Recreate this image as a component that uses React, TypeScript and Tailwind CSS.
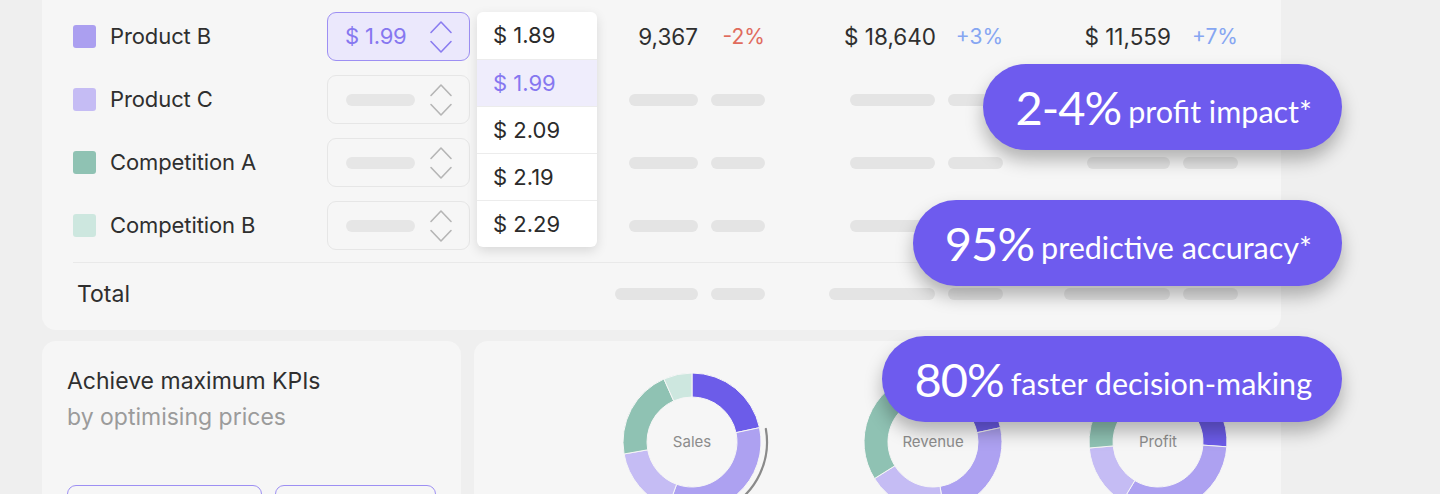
import React from 'react';

const INTER = { fontFamily: 'Inter, "Liberation Sans", sans-serif' };

type Row = {
	name: string;
	swatch: string;
	active?: boolean;
};

const rows: Row[] = [
	{ name: 'Product B', swatch: '#ab9ff0', active: true },
	{ name: 'Product C', swatch: '#c5bcf4' },
	{ name: 'Competition A', swatch: '#8fc2b3' },
	{ name: 'Competition B', swatch: '#cde7df' }
];

const firstRowValues = [
	{ value: '9,367', change: '-2%', negative: true },
	{ value: '$ 18,640', change: '+3%' },
	{ value: '$ 11,559', change: '+7%' }
];

const columnWidths = ['w-[295px]', 'w-[238px]', 'w-[235px]'];
const rowBars = ['w-[69px]', 'w-[85px]', 'w-[83px]'];
const totalBars = ['w-[83px]', 'w-[106px]', 'w-[106px]'];
const pctBars = ['w-[54px]', 'w-[55px]', 'w-[55px]'];

function Chevrons({ color }: { color: string }) {
	return (
		<svg
			width="24"
			height="34"
			viewBox="0 0 24 34"
			fill="none"
			stroke={color}
			strokeWidth="1.6"
			strokeLinecap="round"
			strokeLinejoin="round"
		>
			<path d="M2 12.5 L12 2 L22 12.5" />
			<path d="M2 21.5 L12 32 L22 21.5" />
		</svg>
	);
}

function Bar({ className }: { className: string }) {
	return <div className={`h-[12px] rounded-full bg-[#e4e4e4] ${className}`} />;
}

function PriceInput({ active }: { active?: boolean }) {
	if (active)
		return (
			<div className="flex h-[49px] w-[143px] items-center justify-between rounded-[9px] border-[1.5px] border-[#9d8ff3] bg-[#ebe8fc] pl-[17px] pr-[16px]">
				<span className="text-[22px] tracking-[-0.2px] text-[#8677f0]">$ 1.99</span>
				<Chevrons color="#8a7cf0" />
			</div>
		);

	return (
		<div className="flex h-[49px] w-[143px] items-center justify-between rounded-[9px] border border-[#e6e6e6] pl-[18px] pr-[16px]">
			<div className="h-[12px] w-[69px] rounded-full bg-[#e6e6e6]" />
			<Chevrons color="#b5b5b5" />
		</div>
	);
}

function ValueColumns({ filled, total }: { filled?: boolean; total?: boolean }) {
	return (
		<>
			{columnWidths.map((w, i) => (
				<div key={i} className={`flex items-center justify-end gap-[13px] ${w}`}>
					{filled ? (
						<>
							<span className="text-[22.5px] text-[#2f2f2f]">{firstRowValues[i].value}</span>
							<span
								className={`w-[54px] text-right text-[21px] ${
									firstRowValues[i].negative ? 'text-[#e06b5d]' : 'text-[#86a6f2]'
								}`}
							>
								{firstRowValues[i].change}
							</span>
						</>
					) : (
						<>
							<Bar className={total ? totalBars[i] : rowBars[i]} />
							<Bar className={pctBars[i]} />
						</>
					)}
				</div>
			))}
		</>
	);
}

function Dropdown() {
	const options = ['$ 1.89', '$ 1.99', '$ 2.09', '$ 2.19', '$ 2.29'];
	return (
		<div className="absolute left-[435px] top-[12px] w-[120px] overflow-hidden rounded-[6px] bg-white shadow-[0_4px_12px_rgba(0,0,0,0.12)]">
			{options.map((o, i) => (
				<div
					key={o}
					className={`flex h-[47px] items-center pl-[16px] text-[22px] ${
						i > 0 ? 'border-t border-[#ececec]' : ''
					} ${i === 1 ? 'bg-[#efedfc] text-[#8677f0]' : 'text-[#2b2b2b]'}`}
				>
					{o}
				</div>
			))}
		</div>
	);
}

function PricingTable() {
	return (
		<div className="relative h-[330px] rounded-b-[14px] bg-[#f6f6f6] pl-[31px] pr-[28px] pt-[5px]">
			{rows.map((row, i) => (
				<div key={row.name} className="flex h-[63px] items-center">
					<div className="flex w-[254px] items-center gap-[14px]">
						<div className="h-[23px] w-[23px] rounded-[3px]" style={{ background: row.swatch }} />
						<span className="text-[22px] tracking-[-0.1px] text-[#2f2f2f]">{row.name}</span>
					</div>
					<PriceInput active={row.active} />
					<ValueColumns filled={i === 0} />
				</div>
			))}
			<div className="mt-[5px] h-px bg-[#e9e9e9]" />
			<div className="flex h-[62px] items-center">
				<span className="w-[397px] pl-[4px] text-[23px] text-[#2f2f2f]">Total</span>
				<ValueColumns total />
			</div>
			<Dropdown />
		</div>
	);
}

type Seg = [number, number, string];

function point(cx: number, cy: number, r: number, deg: number) {
	const a = (deg * Math.PI) / 180;
	return [cx + r * Math.sin(a), cy - r * Math.cos(a)];
}

function segPath(a0: number, a1: number, R: number, r: number) {
	const c = 80;
	const large = a1 - a0 > 180 ? 1 : 0;
	const [x0, y0] = point(c, c, R, a0);
	const [x1, y1] = point(c, c, R, a1);
	const [x2, y2] = point(c, c, r, a1);
	const [x3, y3] = point(c, c, r, a0);
	return `M${x0} ${y0} A${R} ${R} 0 ${large} 1 ${x1} ${y1} L${x2} ${y2} A${r} ${r} 0 ${large} 0 ${x3} ${y3} Z`;
}

function Donut({ label, segments, marker }: { label: string; segments: Seg[]; marker?: boolean }) {
	return (
		<div className="relative h-[160px] w-[160px] shrink-0">
			<svg width="160" height="160" viewBox="0 0 160 160">
				{segments.map(([a0, a1, color], i) => (
					<path key={i} d={segPath(a0, a1, 69, 45)} fill={color} stroke="#f6f6f6" strokeWidth="1" />
				))}
				{marker && (
					<path
						d={`M${point(80, 80, 75, 80).join(' ')} A75 75 0 0 1 ${point(80, 80, 75, 150).join(' ')}`}
						fill="none"
						stroke="#8a8a8a"
						strokeWidth="2.2"
						strokeLinecap="round"
					/>
				)}
			</svg>
			<div className="absolute inset-0 flex items-center justify-center text-[15px] text-[#8c8c8c]">
				{label}
			</div>
		</div>
	);
}

const DARK = '#6c5ce9';
const MID = '#ada1f1';
const LIGHT = '#c5bcf4';
const TEAL = '#8fc2b3';
const PALE = '#cde7df';

function Pill({ big, rest }: { big: string; rest: string }) {
	return (
		<div
			className="flex h-[86px] items-center rounded-full bg-[#6e5bee] pl-[32px] pr-[30px] text-white shadow-[0_10px_18px_rgba(0,0,0,0.28)]"
			style={{ fontFamily: 'Lato, "Open Sans", sans-serif' }}
		>
			<span className="text-[47px] leading-none tracking-[-1px]">{big}</span>
			<span className="ml-[7px] mt-[8px] text-[30.5px] leading-none">{rest}</span>
		</div>
	);
}

export default function App() {
	return (
		<div className="relative h-[494px] w-[1440px] overflow-hidden bg-[#efefef]" style={INTER}>
			<div className="w-[1281px] pl-[42px]">
				<PricingTable />

				<div className="mt-[11px] flex gap-[13px]">
					<div className="h-[200px] w-[419px] shrink-0 rounded-[14px] bg-[#f6f6f6] pl-[25px] pt-[22px]">
						<p className="text-[23px] leading-[36px] text-[#2f2f2f]">Achieve maximum KPIs</p>
						<p className="text-[23px] leading-[36px] text-[#9b9b9b]">by optimising prices</p>
						<div className="mt-[50px] flex gap-[13px]">
							<div className="h-[48px] w-[195px] rounded-[9px] border-[1.5px] border-[#9d8ff3]" />
							<div className="h-[48px] w-[161px] rounded-[9px] border-[1.5px] border-[#9d8ff3]" />
						</div>
					</div>

					<div className="flex h-[200px] flex-1 rounded-[14px] bg-[#f6f6f6] pl-[138px] pt-[21px]">
						<Donut
							label="Sales"
							marker
							segments={[
								[0, 78, DARK],
								[78, 200, MID],
								[200, 260, LIGHT],
								[260, 336, TEAL],
								[336, 360, PALE]
							]}
						/>
						<div className="ml-[81px]">
							<Donut
								label="Revenue"
								segments={[
									[20, 78, DARK],
									[78, 171, MID],
									[171, 238, LIGHT],
									[238, 345, TEAL],
									[345, 380, PALE]
								]}
							/>
						</div>
						<div className="ml-[65px]">
							<Donut
								label="Profit"
								segments={[
									[30, 94, DARK],
									[94, 211, MID],
									[211, 265, LIGHT],
									[265, 340, TEAL],
									[340, 390, PALE]
								]}
							/>
						</div>
					</div>
				</div>
			</div>

			<div className="absolute right-[98px] top-[64px] flex flex-col items-end gap-[50px]">
				<Pill big="2-4%" rest="profit impact*" />
				<Pill big="95%" rest="predictive accuracy*" />
				<Pill big="80%" rest="faster decision-making" />
			</div>
		</div>
	);
}
